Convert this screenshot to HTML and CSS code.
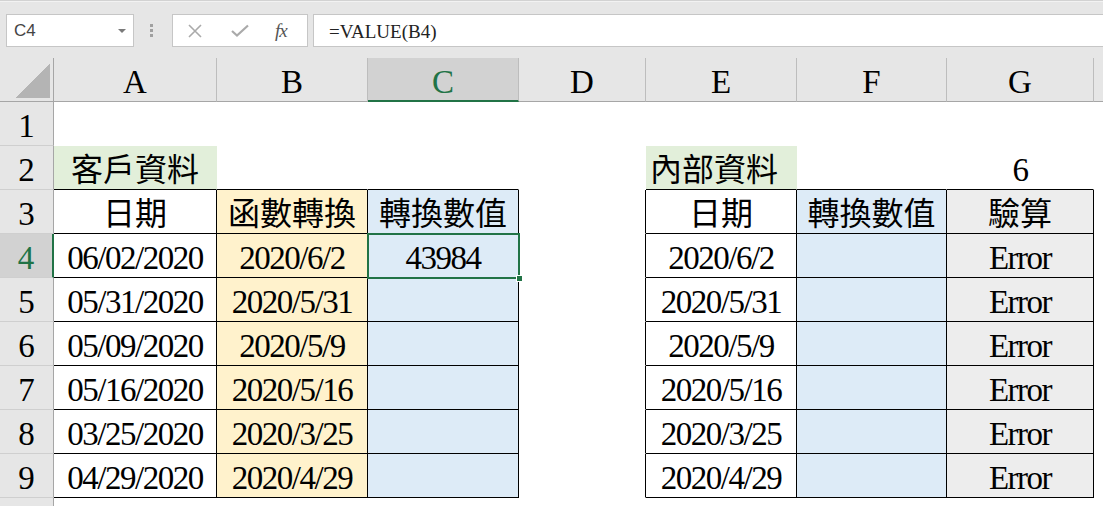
FILE: index.html
```html
<!DOCTYPE html>
<html lang="zh-TW">
<head>
    <meta charset="UTF-8">
    <title>VALUE</title>
    <link rel="stylesheet" href="styles.css">
</head>
<body>

<div class="toolbar">
    <div class="namebox"><span>C4</span><i class="caret"></i></div>
    <div class="grip"><i></i><i></i><i></i></div>
    <div class="fxbox">
        <svg class="ico" width="16" height="14" viewBox="0 0 16 14"><path d="M2 1 L14 13 M14 1 L2 13" stroke="#aaa" stroke-width="1.6" fill="none"/></svg>
        <svg class="ico" width="18" height="13" viewBox="0 0 18 13"><path d="M1 7 L6 11.5 L17 1.5" stroke="#aaa" stroke-width="2.2" fill="none"/></svg>
        <span class="fx">fx</span>
    </div>
    <div class="formula">=VALUE(B4)</div>
</div>

<div class="sheet">
    <!-- 欄標題 -->
    <div class="ch corner"></div>
    <div class="ch">A</div>
    <div class="ch">B</div>
    <div class="ch sel">C</div>
    <div class="ch">D</div>
    <div class="ch">E</div>
    <div class="ch">F</div>
    <div class="ch">G</div>
    <div class="ch last"></div>

    <!-- 1 -->
    <div class="rh">1</div>
    <div class="c"></div><div class="c"></div><div class="c"></div><div class="c"></div>
    <div class="c"></div><div class="c"></div><div class="c"></div><div class="c last"></div>

    <!-- 2 -->
    <div class="rh">2</div>
    <div class="c zh green top">客戶資料</div>
    <div class="c top"></div>
    <div class="c top"></div>
    <div class="c"></div>
    <div class="c zh green top left">內部資料</div>
    <div class="c top"></div>
    <div class="c top">6</div>
    <div class="c last"></div>

    <!-- 3 -->
    <div class="rh">3</div>
    <div class="c zh t">日期</div>
    <div class="c zh t yellow">函數轉換</div>
    <div class="c zh t blue">轉換數值</div>
    <div class="c edge"></div>
    <div class="c zh t">日期</div>
    <div class="c zh t blue">轉換數值</div>
    <div class="c zh t gray">驗算</div>
    <div class="c last"></div>

    <!-- 4 -->
    <div class="rh sel">4</div>
    <div class="c t">06/02/2020</div>
    <div class="c t yellow">2020/6/2</div>
    <div class="c t blue active">43984<span class="handle"></span></div>
    <div class="c edge"></div>
    <div class="c t">2020/6/2</div>
    <div class="c t blue"></div>
    <div class="c t gray">Error</div>
    <div class="c last"></div>

    <!-- 5 -->
    <div class="rh">5</div>
    <div class="c t">05/31/2020</div>
    <div class="c t yellow">2020/5/31</div>
    <div class="c t blue"></div>
    <div class="c edge"></div>
    <div class="c t">2020/5/31</div>
    <div class="c t blue"></div>
    <div class="c t gray">Error</div>
    <div class="c last"></div>

    <!-- 6 -->
    <div class="rh">6</div>
    <div class="c t">05/09/2020</div>
    <div class="c t yellow">2020/5/9</div>
    <div class="c t blue"></div>
    <div class="c edge"></div>
    <div class="c t">2020/5/9</div>
    <div class="c t blue"></div>
    <div class="c t gray">Error</div>
    <div class="c last"></div>

    <!-- 7 -->
    <div class="rh">7</div>
    <div class="c t">05/16/2020</div>
    <div class="c t yellow">2020/5/16</div>
    <div class="c t blue"></div>
    <div class="c edge"></div>
    <div class="c t">2020/5/16</div>
    <div class="c t blue"></div>
    <div class="c t gray">Error</div>
    <div class="c last"></div>

    <!-- 8 -->
    <div class="rh">8</div>
    <div class="c t">03/25/2020</div>
    <div class="c t yellow">2020/3/25</div>
    <div class="c t blue"></div>
    <div class="c edge"></div>
    <div class="c t">2020/3/25</div>
    <div class="c t blue"></div>
    <div class="c t gray">Error</div>
    <div class="c last"></div>

    <!-- 9 -->
    <div class="rh">9</div>
    <div class="c t">04/29/2020</div>
    <div class="c t yellow">2020/4/29</div>
    <div class="c t blue"></div>
    <div class="c edge"></div>
    <div class="c t">2020/4/29</div>
    <div class="c t blue"></div>
    <div class="c t gray">Error</div>
    <div class="c last"></div>

    <!-- 10（只露出一點點） -->
    <div class="rh"></div>
    <div class="c"></div><div class="c"></div><div class="c"></div><div class="c"></div>
    <div class="c"></div><div class="c"></div><div class="c"></div><div class="c last"></div>
</div>

</body>
</html>
```

FILE: styles.css
```css
* {margin:0;padding:0;box-sizing:border-box;}
html,body {width:100%;height:100%;}
body {overflow:hidden;background:#fff;}

/* 上方公式列 */
.toolbar{
    display: flex;
    height: 58px;
    padding: 13px 0 0 6px;
    background: #e6e6e6;
    border-top: 1px solid #d2d2d2;
    box-shadow: inset 0 1px 0 #f2f2f2;
}
.namebox{
    display: flex;
    align-items: center;
    width: 128px;
    height: 33px;
    padding-left: 7px;
    background: #fff;
    border: 1px solid #c6c6c6;
    font: 17px "Liberation Sans", sans-serif;
    color: #444;
}
.namebox span{flex:1;}
.caret{
    width: 0;
    height: 0;
    margin-right: 7px;
    border-left: 4px solid transparent;
    border-right: 4px solid transparent;
    border-top: 4px solid #7a7a7a;
}
.grip{
    display: flex;
    flex-direction: column;
    gap: 2px;
    width: 38px;
    padding: 10px 0 0 16px;
}
.grip i{width:3px;height:3px;background:#a0a0a0;}
.fxbox{
    display: flex;
    align-items: center;
    width: 136px;
    height: 33px;
    padding-left: 14px;
    background: #fff;
    border: 1px solid #c6c6c6;
}
.ico{margin-right:28px;}
.ico + .ico{margin-right:26px;}
.fx{
    font: italic 19px "Liberation Serif", serif;
    color: #555;
    letter-spacing: -1px;
}
.formula{
    flex: 1;
    height: 33px;
    margin-left: 5px;
    margin-right: -2px;
    padding: 6px 0 0 15px;
    background: #fff;
    border: 1px solid #c6c6c6;
    font: 19px "Liberation Serif", serif;
    color: #222;
}

/* 工作表 */
.sheet{
    display: grid;
    grid-template-columns: 54px 163px 151px 151px 127px 151px 150px 147px 1fr;
    grid-auto-rows: 44px;
    height: 448px;
    overflow: hidden;
    font-family: "Liberation Serif", "Noto Sans CJK TC", serif;
    font-size: 33px;
    line-height: 38px;
    color: #000;
}
.ch,.rh,.c{
    padding-top: 5px;
    text-align: center;
    white-space: nowrap;
}
.ch{
    background: #e6e6e6;
    border-right: 1px solid #bdbdbd;
    border-bottom: 1px solid #a6a6a6;
}
.ch.sel{
    background: #d2d2d2;
    color: #217346;
    border-bottom: 2px solid #217346;
}
.corner{
    border-right-color: #a6a6a6;
    background: #e6e6e6 linear-gradient(to bottom right, transparent 50%, #b4b4b4 50%) no-repeat right 3px bottom 3px / 35px 35px;
}
.ch.last{border-right:0;}
.rh{
    background: #e6e6e6;
    border-right: 1px solid #a6a6a6;
    border-bottom: 1px solid #cfcfcf;
}
.rh.sel{
    background: #d2d2d2;
    color: #217346;
    border-right: 2px solid #217346;
}
.c{
    border-right: 1px solid transparent;
    border-bottom: 1px solid transparent;
    letter-spacing: -1.5px;
}
.c.last{overflow:hidden;}
.zh{font-size:32px;letter-spacing:0;}
.left{text-align:left;padding-left:4px;}
.t{border-right-color:#000;border-bottom-color:#000;}
.top{border-bottom-color:#000;}
.edge{border-right-color:#000;}

.green{background:#e2efda;}
.yellow{background:#fff2cc;}
.blue{background:#ddebf7;}
.gray{background:#ededed;}

/* 目前儲存格 */
.active{position:relative;}
.active::after{
    content: "";
    position: absolute;
    top: -1px;
    left: -1px;
    right: -2px;
    bottom: -2px;
    border: 2px solid #217346;
}
.handle{
    position: absolute;
    right: -5px;
    bottom: -5px;
    z-index: 1;
    width: 7px;
    height: 7px;
    background: #217346;
    border: 1px solid #fff;
}
```
